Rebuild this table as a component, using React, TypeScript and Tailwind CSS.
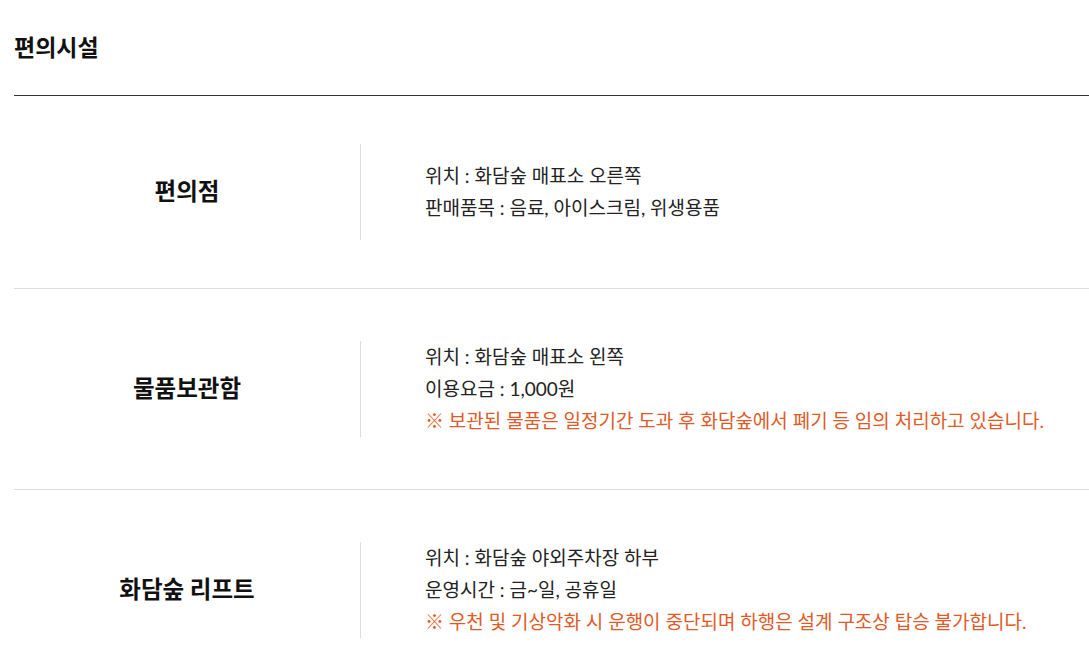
import React from "react";

type Row = { title: string; lines: string[]; notice?: string; pad: string };

const rows: Row[] = [
  {
    title: "편의점",
    lines: ["위치 : 화담숲 매표소 오른쪽", "판매품목 : 음료, 아이스크림, 위생용품"],
    pad: "pt-[48px] pb-[48px]",
  },
  {
    title: "물품보관함",
    lines: ["위치 : 화담숲 매표소 왼쪽", "이용요금 : 1,000원"],
    notice: "※ 보관된 물품은 일정기간 도과 후 화담숲에서 폐기 등 임의 처리하고 있습니다.",
    pad: "pt-[52px] pb-[52px]",
  },
  {
    title: "화담숲 리프트",
    lines: ["위치 : 화담숲 야외주차장 하부", "운영시간 : 금~일, 공휴일"],
    notice: "※ 우천 및 기상악화 시 운행이 중단되며 하행은 설계 구조상 탑승 불가합니다.",
    pad: "pt-[52px] pb-[52px]",
  },
];

export default function App() {
  return (
    <div
      className="bg-white pl-[14px] text-[#222]"
      style={{ fontFamily: 'Lato, "Noto Sans CJK KR", sans-serif' }}
    >
      <div className="h-[96px] flex items-center border-b border-[#333]">
        <h2 className="text-[23px] font-bold text-[#111] leading-none">편의시설</h2>
      </div>
      {rows.map((r, i) => (
        <div
          key={r.title}
          className={`flex ${r.pad} ${i < rows.length - 1 ? "border-b border-[#dddddd]" : ""}`}
        >
          <div className="w-[347px] flex items-center justify-center border-r border-[#dddddd] h-[96px]">
            <span className="text-[23.5px] font-bold text-[#111]">{r.title}</span>
          </div>
          <div className="pl-[64px] flex flex-col justify-center h-[96px] text-[19px] leading-[32px]">
            {r.lines.map((l) => (
              <p key={l}>{l}</p>
            ))}
            {r.notice && <p className="text-[#e05a28]">{r.notice}</p>}
          </div>
        </div>
      ))}
    </div>
  );
}
